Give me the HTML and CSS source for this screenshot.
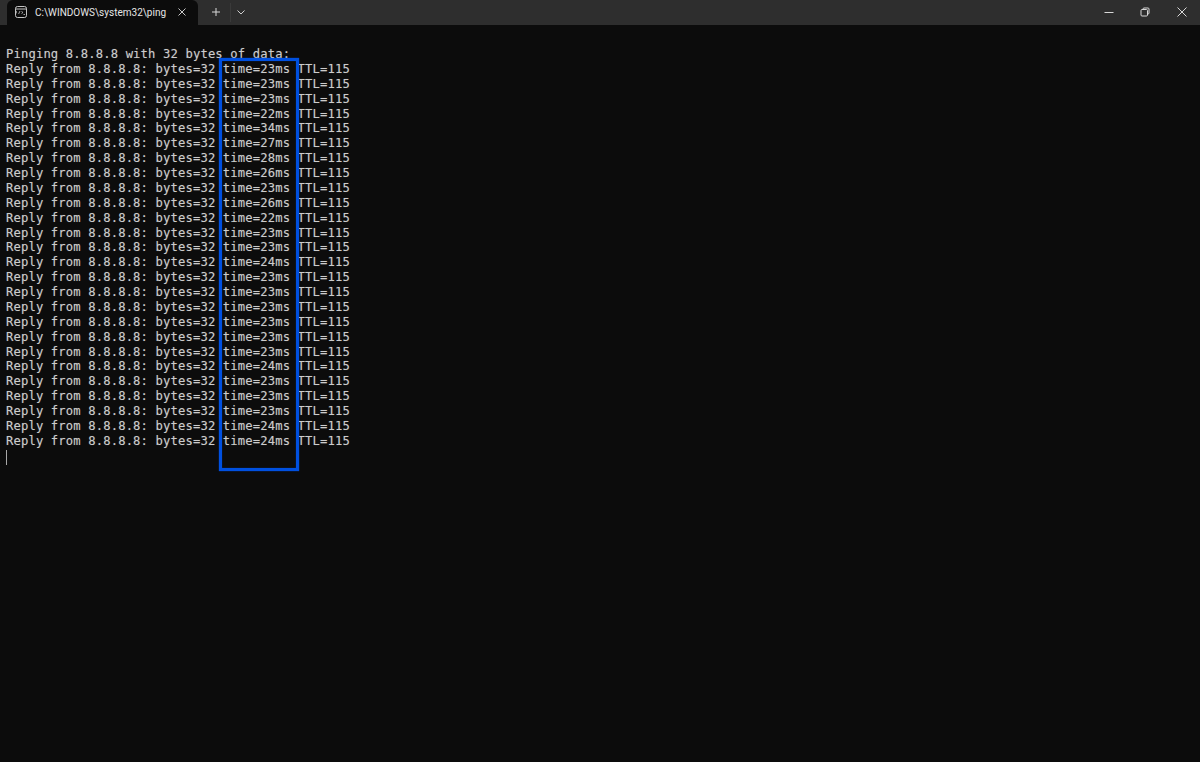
FILE: index.html
```html
<!DOCTYPE html>
<html lang="en">
<head>
<meta charset="utf-8">
<title>C:\WINDOWS\system32\ping</title>
<link rel="stylesheet" href="styles.css">
</head>
<body>
<div class="window">
  <header class="titlebar">
    <div class="tab">
      <svg class="tab-icon" width="12" height="12" viewBox="0 0 12 12" fill="none" stroke="#c4c4c4" stroke-width="1"><rect x="0.5" y="0.5" width="11" height="11" rx="2"/><path d="M0.5 3h11"/><path d="M2 5.2c-.6 0-.8.4-.8 1s.2 1 .8 1M5 5l-1.4 3M6.5 5.5l1.5 1-1.5 1M8.5 8.5h1.5" stroke-width="0.8"/></svg>
      <span class="tab-title">C:\WINDOWS\system32\ping</span>
      <svg class="tab-close" width="8" height="8" viewBox="0 0 8 8" stroke="#c8c8c8" stroke-width="1"><path d="M0.5 0.5l7 7M7.5 0.5l-7 7"/></svg>
    </div>
    <div class="tab-actions">
      <svg class="new-tab" width="8" height="8" viewBox="0 0 8 8" stroke="#d8d8d8" stroke-width="1"><path d="M4 0v8M0 4h8"/></svg>
      <span class="divider"></span>
      <svg class="dropdown" width="8" height="5" viewBox="0 0 8 5" fill="none" stroke="#d0d0d0" stroke-width="1"><path d="M0.5 0.5l3.5 3.5 3.5-3.5"/></svg>
    </div>
    <div class="controls">
      <span class="ctrl"><svg width="10" height="10" viewBox="0 0 10 10" stroke="#d8d8d8" stroke-width="1"><path d="M0.5 5.5h9"/></svg></span>
      <span class="ctrl"><svg width="10" height="10" viewBox="0 0 10 10" fill="none" stroke="#d8d8d8" stroke-width="1"><rect x="1" y="2.5" width="6.5" height="6.5" rx="1"/><path d="M3 2.5v-.5a1 1 0 0 1 1-1h4a1 1 0 0 1 1 1v4a1 1 0 0 1-1 1h-.5"/></svg></span>
      <span class="ctrl"><svg width="10" height="10" viewBox="0 0 10 10" stroke="#d8d8d8" stroke-width="1"><path d="M0.5 0.5l9 9M9.5 0.5l-9 9"/></svg></span>
    </div>
  </header>
  <main class="terminal">
<pre class="output">

Pinging 8.8.8.8 with 32 bytes of data:
Reply from 8.8.8.8: bytes=32 time=23ms TTL=115
Reply from 8.8.8.8: bytes=32 time=23ms TTL=115
Reply from 8.8.8.8: bytes=32 time=23ms TTL=115
Reply from 8.8.8.8: bytes=32 time=22ms TTL=115
Reply from 8.8.8.8: bytes=32 time=34ms TTL=115
Reply from 8.8.8.8: bytes=32 time=27ms TTL=115
Reply from 8.8.8.8: bytes=32 time=28ms TTL=115
Reply from 8.8.8.8: bytes=32 time=26ms TTL=115
Reply from 8.8.8.8: bytes=32 time=23ms TTL=115
Reply from 8.8.8.8: bytes=32 time=26ms TTL=115
Reply from 8.8.8.8: bytes=32 time=22ms TTL=115
Reply from 8.8.8.8: bytes=32 time=23ms TTL=115
Reply from 8.8.8.8: bytes=32 time=23ms TTL=115
Reply from 8.8.8.8: bytes=32 time=24ms TTL=115
Reply from 8.8.8.8: bytes=32 time=23ms TTL=115
Reply from 8.8.8.8: bytes=32 time=23ms TTL=115
Reply from 8.8.8.8: bytes=32 time=23ms TTL=115
Reply from 8.8.8.8: bytes=32 time=23ms TTL=115
Reply from 8.8.8.8: bytes=32 time=23ms TTL=115
Reply from 8.8.8.8: bytes=32 time=23ms TTL=115
Reply from 8.8.8.8: bytes=32 time=24ms TTL=115
Reply from 8.8.8.8: bytes=32 time=23ms TTL=115
Reply from 8.8.8.8: bytes=32 time=23ms TTL=115
Reply from 8.8.8.8: bytes=32 time=23ms TTL=115
Reply from 8.8.8.8: bytes=32 time=24ms TTL=115
Reply from 8.8.8.8: bytes=32 time=24ms TTL=115
<span class="cursor"></span></pre>
    <div class="highlight"></div>
  </main>
</div>
</body>
</html>
```

FILE: styles.css
```css
* { box-sizing: border-box; }
html, body { margin: 0; height: 100%; }
body { background: #0c0c0c; overflow: hidden; }
.window { display: flex; flex-direction: column; height: 762px; }
.titlebar {
  display: flex;
  align-items: flex-end;
  height: 25px;
  flex: none;
  background: #2e2e2e;
  font-family: Roboto, "Noto Sans", sans-serif;
}
.tab {
  display: flex;
  align-items: center;
  width: 191px;
  height: 25px;
  margin-left: 7px;
  padding: 0 0 1px 8px;
  background: #0c0c0c;
  border-radius: 6px 6px 0 0;
}
.tab-title { width: 131px; margin-left: 8px; font-size: 10px; color: #e6e6e6; white-space: nowrap; }
.tab-close { margin-left: 12px; }
.tab-actions { display: flex; align-items: center; height: 25px; padding-bottom: 1px; }
.new-tab { margin-left: 14px; }
.divider { width: 1px; height: 19px; margin-left: 10px; background: #3a3a3a; }
.dropdown { margin-left: 6px; }
.controls { display: flex; align-items: center; margin-left: auto; height: 25px; padding-bottom: 1px; }
.ctrl { display: flex; align-items: center; justify-content: center; width: 36.5px; height: 24px; }
.terminal { position: relative; flex: 1; padding: 7.2px 0 0 6px; }
.output {
  margin: 0;
  font-family: "DejaVu Sans Mono", monospace;
  font-size: 12.2px;
  letter-spacing: 0.14px;
  line-height: 14.88px;
  color: #cccccc;
  text-shadow: 0 0 1px rgba(204, 204, 204, 0.35);
}
.cursor { display: inline-block; width: 1px; height: 15px; margin-top: 1px; background: #a8a8a8; vertical-align: top; }
.highlight {
  position: absolute;
  left: 219px;
  top: 33px;
  width: 80px;
  height: 413px;
  border: 3px solid #0050e0;
  box-shadow: 0 0 1px #0050e0, inset 0 0 1px #0050e0;
}
```
